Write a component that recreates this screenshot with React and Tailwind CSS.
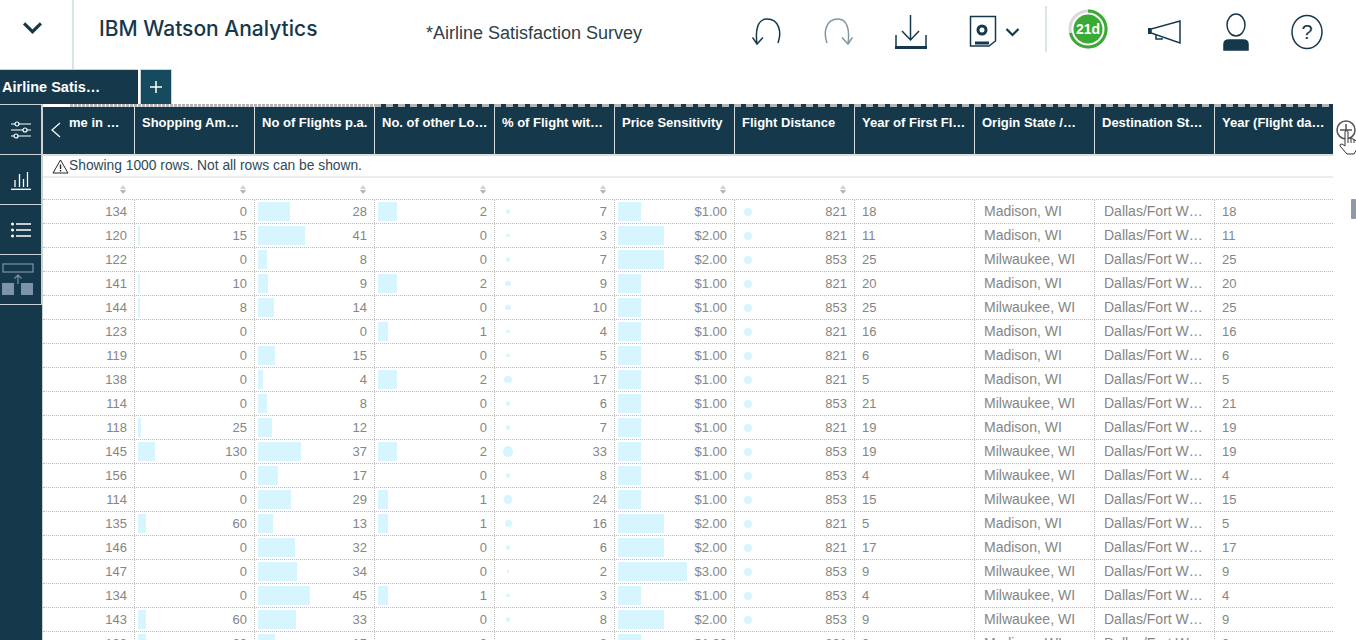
import React from 'react';

const mad = 'Madison, WI';
const mil = 'Milwaukee, WI';
const rows = [
  [134, 0, 28, 2, 7, 1, 821, 18, mad],
  [120, 15, 41, 0, 3, 2, 821, 11, mad],
  [122, 0, 8, 0, 7, 2, 853, 25, mil],
  [141, 10, 9, 2, 9, 1, 821, 20, mad],
  [144, 8, 14, 0, 10, 1, 853, 25, mil],
  [123, 0, 0, 1, 4, 1, 821, 16, mad],
  [119, 0, 15, 0, 5, 1, 821, 6, mad],
  [138, 0, 4, 2, 17, 1, 821, 5, mad],
  [114, 0, 8, 0, 6, 1, 853, 21, mil],
  [118, 25, 12, 0, 7, 1, 821, 19, mad],
  [145, 130, 37, 2, 33, 1, 853, 19, mil],
  [156, 0, 17, 0, 8, 1, 853, 4, mil],
  [114, 0, 29, 1, 24, 1, 853, 15, mil],
  [135, 60, 13, 1, 16, 2, 821, 5, mad],
  [146, 0, 32, 0, 6, 2, 821, 17, mad],
  [147, 0, 34, 0, 2, 3, 853, 9, mil],
  [134, 0, 45, 1, 3, 1, 853, 4, mil],
  [143, 60, 33, 0, 8, 2, 853, 9, mil],
  [133, 60, 15, 0, 8, 1, 821, 3, mad],
];

const headers = [
  'Shopping Am…',
  'No of Flights p.a.',
  'No. of other Lo…',
  '% of Flight wit…',
  'Price Sensitivity',
  'Flight Distance',
  'Year of First Fl…',
  'Origin State /…',
  'Destination St…',
  'Year (Flight da…',
];

const grid = 'grid grid-cols-[92px_120px_120px_120px_120px_120px_120px_120px_120px_120px_118px]';

const Bar = ({ width }) => (
  <span className="h-[19px] bg-[#d6f5fe] shrink-0" style={{ width }} />
);

const Dot = ({ size }) => (
  <span className="w-[26px] flex justify-center shrink-0 ml-[-3px]">
    <span className="rounded-full bg-[#d6f5fe]" style={{ width: size, height: size }} />
  </span>
);

const NumCell = ({ mark, children }) => (
  <div className="flex items-center justify-between pl-[3px] pr-[7px] border-r border-dotted border-[#bbb]">
    {mark || <span />}
    <span>{children}</span>
  </div>
);

const Row = ({ r }) => (
  <div className={`${grid} h-[24px] shrink-0 border-b border-dotted border-[#bbb] text-[13px] text-[#858585]`}>
    <NumCell>{r[0]}</NumCell>
    <NumCell mark={r[1] > 0 ? <Bar width={Math.max(2, r[1] * 0.13)} /> : null}>{r[1]}</NumCell>
    <NumCell mark={r[2] > 0 ? <Bar width={r[2] * 1.15} /> : null}>{r[2]}</NumCell>
    <NumCell mark={r[3] > 0 ? <Bar width={r[3] * 9.5} /> : null}>{r[3]}</NumCell>
    <NumCell mark={<Dot size={Math.sqrt(r[4]) * 1.75} />}>{r[4]}</NumCell>
    <NumCell mark={<Bar width={r[5] * 23} />}>${r[5]}.00</NumCell>
    <NumCell mark={<Dot size={8} />}>{r[6]}</NumCell>
    <div className="flex items-center pl-[7px] border-r border-dotted border-[#bbb]">{r[7]}</div>
    <div className="flex items-center pl-[9px] text-[14px] border-r border-dotted border-[#bbb]">{r[8]}</div>
    <div className="flex items-center pl-[9px] text-[14px] border-r border-dotted border-[#bbb]">Dallas/Fort W…</div>
    <div className="flex items-center pl-[7px]">{r[7]}</div>
  </div>
);

const RailButton = ({ children }) => (
  <div className="h-[50px] flex items-center justify-center border-b border-r border-[#c9d3d8]">{children}</div>
);

const Chevron = ({ className }) => (
  <svg viewBox="0 0 20 12" className={className} fill="none" stroke="#15394b" strokeWidth="3">
    <path d="M2 2l8 8 8-8" />
  </svg>
);

const UndoArrow = ({ color, flip }) => (
  <svg width="30" height="30" viewBox="0 0 30 30" fill="none" stroke={color} strokeWidth="1.5" className={flip ? '-scale-x-100' : ''}>
    <path d="M26 26C30 15 27 2 15 2C6 2 3 12 5 27" />
    <path d="M0.5 20.5L5 27L11 20.5" />
  </svg>
);

export default function App() {
  return (
    <div className="w-[1356px] h-[640px] overflow-hidden bg-white font-['Liberation_Sans',sans-serif]">
      {/* top bar */}
      <div className="h-[69px] flex items-center">
        <div className="w-[74px] h-full flex items-center justify-center border-r-2 border-[#d9e4e8] pr-[8px] pb-[14px]">
          <Chevron className="w-[21px] h-[13px]" />
        </div>
        <div className="ml-[25px] w-[327px] text-[21px] font-medium font-['Inter',sans-serif] text-[#17384a] pb-[12px]">IBM Watson Analytics</div>
        <div className="w-[326px] text-[18px] text-[#2d3f49] pb-[2px]">*Airline Satisfaction Survey</div>
        <div className="flex items-center pb-[6px]">
          <UndoArrow color="#15394b" />
          <div className="ml-[41px]"><UndoArrow color="#7f97a3" flip /></div>
          <svg width="32" height="36" viewBox="0 0 32 36" fill="none" stroke="#15394b" strokeWidth="1.5" className="ml-[42px]">
            <path d="M15.5 1V26M7 17l8.5 9 8.5-9" />
            <path d="M1 21V34H31V21" />
            <path d="M0 33.5H32" strokeWidth="3" />
          </svg>
          <svg width="28" height="34" viewBox="0 0 28 34" fill="none" stroke="#15394b" className="ml-[42px]">
            <path d="M1.5 1.5H26.5V26L20 31H1.5Z" strokeWidth="1.5" />
            <circle cx="13" cy="15" r="4" strokeWidth="3" />
            <path d="M6 28H20" strokeWidth="3" />
          </svg>
          <Chevron className="w-[15px] h-[10px] ml-[8px]" />
        </div>
        <div className="ml-[25px] h-[46px] w-[2px] bg-[#d9e4e8] mb-[11px]" />
        <svg width="42" height="42" viewBox="0 0 42 42" className="ml-[20px] mb-[11px]">
          <circle cx="21" cy="21" r="18" fill="none" stroke="#d9d9d9" strokeWidth="3" />
          <path d="M21 3A18 18 0 1 1 3.5 25" fill="none" stroke="#3aaa35" strokeWidth="3" />
          <circle cx="21" cy="21" r="14.5" fill="#3aaa35" />
          <text x="21" y="26" textAnchor="middle" fontSize="14" fontWeight="700" fill="#fff">21d</text>
        </svg>
        <svg width="34" height="26" viewBox="0 0 34 26" fill="none" stroke="#15394b" strokeWidth="1.5" className="ml-[39px] mb-[6px]">
          <path d="M32 2V24L3 14V10Z" />
          <path d="M1.5 9V15" strokeWidth="3" />
          <path d="M8 16V20H14V19" />
        </svg>
        <svg width="26" height="38" viewBox="0 0 26 38" fill="none" stroke="#15394b" strokeWidth="1.5" className="ml-[41px] mb-[6px]">
          <ellipse cx="13" cy="12" rx="9" ry="11" />
          <path d="M1 37V31Q1 27 6 27H20Q25 27 25 31V37Z" fill="#15394b" />
        </svg>
        <svg width="32" height="36" viewBox="0 0 32 36" fill="none" stroke="#15394b" strokeWidth="1.5" className="ml-[42px] mb-[6px]">
          <ellipse cx="16" cy="18" rx="15" ry="16.5" />
          <text x="16" y="25" textAnchor="middle" fontSize="20" stroke="none" fill="#15394b">?</text>
        </svg>
      </div>

      {/* tabs */}
      <div className="h-[35px] flex">
        <div className="w-[138px] bg-[#15394b] border-t border-[#c9d3d8] pl-[2px] pt-[2px] flex items-center text-[14.5px] font-bold text-white">Airline Satis…</div>
        <div className="ml-[2px] w-[32px] bg-[#164a5f] border-t border-x border-[#c9d3d8] flex items-center justify-center">
          <svg width="14" height="14" viewBox="0 0 14 14" stroke="#fff" strokeWidth="1.5"><path d="M7 1V13M1 7H13" /></svg>
        </div>
      </div>

      <div className="flex h-[536px]">
        {/* left rail */}
        <div className="w-[43px] h-full bg-[#15394b] border-r border-[#d0d0d0] border-t border-t-[#c9d3d8]">
          <RailButton>
            <svg width="22" height="18" viewBox="0 0 22 18" fill="none" stroke="#fff" strokeWidth="1.2">
              <path d="M1 3H5M9 3H21M1 9H13M17 9H21M1 15H4M8 15H21" />
              <circle cx="7" cy="3" r="2" /><circle cx="15" cy="9" r="2" /><circle cx="6" cy="15" r="2" />
            </svg>
          </RailButton>
          <RailButton>
            <svg width="20" height="20" viewBox="0 0 20 20" stroke="#fff" strokeWidth="1.3">
              <path d="M4 17V10M8.5 17V4M12.5 17V9M16.5 17V2" />
              <path d="M0 19.3H20" />
            </svg>
          </RailButton>
          <RailButton>
            <svg width="20" height="18" viewBox="0 0 20 18" stroke="#fff" strokeWidth="1.6" fill="#fff">
              <path d="M5 3H20M5 9H20M5 15H20" />
              <circle cx="1.5" cy="3" r="0.7" /><circle cx="1.5" cy="9" r="0.7" /><circle cx="1.5" cy="15" r="0.7" />
            </svg>
          </RailButton>
          <RailButton>
            <svg width="32" height="34" viewBox="0 0 32 34" fill="none" className="mr-[6px]">
              <rect x="1" y="1" width="30" height="8" stroke="#7d93ab" strokeWidth="1.2" />
              <path d="M16 21V12M12.5 15.5L16 12L19.5 15.5" stroke="#7d93ab" strokeWidth="1.2" />
              <rect x="0" y="20" width="12" height="12" fill="#7d93ab" />
              <rect x="19" y="20" width="12" height="12" fill="#7d93ab" />
            </svg>
          </RailButton>
        </div>

        {/* table */}
        <div className="w-[1290px] h-full flex flex-col overflow-hidden">
          <div className="h-[3px] flex shrink-0">
            <div className="ml-[27px] w-[304px] bg-[repeating-linear-gradient(90deg,#b5b5b5_0,#b5b5b5_3px,transparent_3px,transparent_4px)]" />
            <div className="flex-1 bg-[repeating-linear-gradient(90deg,#b5b5b5_0,#b5b5b5_7px,#15394b_7px,#15394b_12px)]" />
          </div>
          <div className={`${grid} h-[47px] bg-[#15394b] text-[13px] font-bold text-white shrink-0`}>
            <div className="flex items-start pt-[6px] border-r border-[#d5dde1]">
              <svg width="10" height="16" viewBox="0 0 10 16" fill="none" stroke="#fff" strokeWidth="1.2" className="ml-[8px] mt-[9px]">
                <path d="M9 1L1 8L9 15" />
              </svg>
              <span className="ml-[8px]">me in …</span>
            </div>
            {headers.map((h, i) => (
              <div key={h} className={`pt-[6px] pl-[7px] whitespace-nowrap overflow-hidden ${i < 9 ? 'border-r border-[#d5dde1]' : ''}`}>{h}</div>
            ))}
          </div>
          <div className="h-[24px] border-t-2 border-[#dedede] border-b-2 border-b-[#ececec] shrink-0 flex items-center pl-[9px] text-[13.8px] text-[#2f4a58]">
            <svg width="17" height="15" viewBox="0 0 17 15" fill="none" stroke="#222" strokeWidth="1">
              <path d="M8.5 1L16 14H1Z" />
              <path d="M8.5 5.5V10M8.5 11V12.5" strokeWidth="1.4" />
            </svg>
            <span>Showing 1000 rows. Not all rows can be shown.</span>
          </div>
          <div className={`${grid} h-[22px] shrink-0 border-b border-dotted border-[#bbb]`}>
            {[0, 1, 2, 3, 4, 5, 6].map(i => (
              <div key={i} className="flex flex-col items-end justify-center pr-[9px] gap-[1px] pt-[1px]">
                <span className="w-0 h-0 border-x-[3px] border-x-transparent border-b-[4px] border-b-[#d3d3d3]" />
                <span className="w-0 h-0 border-x-[3px] border-x-transparent border-t-[4px] border-t-[#b3b3b3]" />
              </div>
            ))}
          </div>
          {rows.map((r, i) => <Row key={i} r={r} />)}
        </div>

        {/* right gutter */}
        <div className="flex-1 flex flex-col pl-[3px]">
          <div className="relative mt-[16px] h-[79px]">
            <svg width="20" height="20" viewBox="0 0 20 20" fill="none" stroke="#555" strokeWidth="1.5">
              <circle cx="10" cy="10" r="9" />
              <path d="M4 10H16M10 4V16" />
            </svg>
            <svg width="18" height="25" viewBox="0 0 18 25" fill="#fff" stroke="#333" strokeWidth="1" className="absolute left-[3px] top-[10px]">
              <path d="M6 13V2Q6 0.7 7.5 0.7T9 2V8Q13 8 16 10Q18 11 18 14V19L15 24H8L1 16Q0.5 14 3 14L6 16Z" />
              <path d="M9 8V13M12 9V13M15 10V13" />
            </svg>
          </div>
          <div className="ml-[15px] w-[5px] h-[20px] rounded-[1px] bg-[#8e99aa]" />
        </div>
      </div>
    </div>
  );
}
